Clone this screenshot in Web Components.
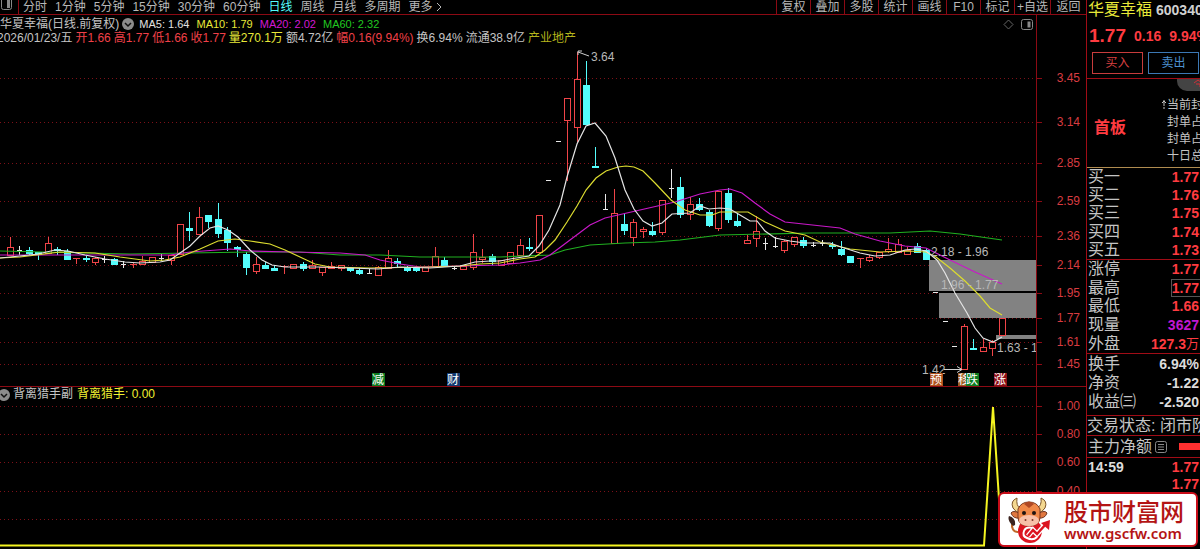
<!DOCTYPE html>
<html lang="zh-CN">
<head>
<meta charset="utf-8">
<title>华夏幸福 600340</title>
<style>
html,body{margin:0;background:#000}
body{font:12px/14px "Liberation Sans","Noto Sans CJK SC",sans-serif;color:#c4c4c4;
--line:#8c0a14;--red:#ff3b40;--yellow:#e8e838;--white:#c4c4c4;--magenta:#d418d4;--green:#20c820;--cyan:#54fcfc;overflow-x:hidden}
</style>
</head>
<body>
<stock-app></stock-app>
<script>
const define = (name, html, init) => customElements.define(name, class extends HTMLElement {
  constructor() {
    super();
    this.attachShadow({mode: 'open'}).innerHTML = typeof html === 'function' ? html(this) : html;
  }
  connectedCallback() { if (init) init(this, this.shadowRoot); }
});

/* Period tabs on the left, tool buttons on the right */
define('tool-bar', () => {
  const tabs = ['分时','1分钟','5分钟','15分钟','30分钟','60分钟','日线','周线','月线','多周期','更多'];
  const tools = ['复权','叠加','多股','统计','画线','F10','标记','+自选','返回'];
  return `<style>
  :host{display:flex;height:14px;border-bottom:1px solid var(--line);overflow:hidden}
  button{all:unset;font:inherit;line-height:10px;height:14px;white-space:nowrap;cursor:pointer;color:#b8b8b8}
  .pane{width:18px;border-right:1px solid var(--line);flex:none}
  .pane svg{display:block}
  nav{display:flex;gap:8px;padding-left:4px;flex:1}
  .on{color:var(--cyan)}
  .tools{display:flex}
  .tools button{box-sizing:border-box;width:34px;border-left:1px solid var(--line);text-align:center}
  .tools button:nth-last-child(-n+2){width:36px}
  .more svg{vertical-align:-1px;margin-left:3px}
  </style>
  <button class="pane" aria-label="窗格"><svg width="16" height="14"><rect x="1.5" y="-3.500" width="10" height="13" rx="2" fill="none" stroke="#888"/><rect x="7" y="0" width="3" height="8" fill="#888"/></svg></button>
  <nav>${tabs.map(t => `<button class="${t==='日线'?'on':''}${t==='更多'?'more':''}">${t}${t==='更多'?'<svg width="7" height="10"><path d="M1 1l4 4-4 4" fill="none" stroke="#b8b8b8"/></svg>':''}</button>`).join('')}</nav>
  <div class="tools">${tools.map(t => `<button>${t}</button>`).join('')}</div>`;
});

define('fold-button', `<style>:host{display:block;flex:none}button{all:unset;display:block;cursor:pointer}svg{display:block}</style>
<button aria-label="折叠"><svg width="12" height="12"><circle cx="6" cy="6" r="6" fill="#8c8c8c"/><path d="M3 5l3 3 3-3" fill="none" stroke="#111" stroke-width="1.500"/></svg></button>`);

define('chart-head', `<style>
:host{display:flex}
.info{flex:1;min-width:0;border-right:1px solid var(--line);display:flex;justify-content:space-between}
.axis{width:49px;flex:none}
</style><div class="info"><div><slot></slot></div><slot name="tools"></slot></div><div class="axis"></div>`);

define('price-info', `<style>
:host{display:block;padding-top:2px;height:30px;white-space:nowrap}
div{display:flex;line-height:14px}
.ma{align-items:center}
fold-button{margin:0 5px 0 3px}
.ma span{font-size:11px;margin-right:7px}
.ohlc{gap:3px;margin-left:-3px}
.r{color:#f04048}.y{color:var(--yellow)}.m{color:var(--magenta)}.g{color:var(--green)}.w{color:#e0e0e0}.d{color:#b4b41c}
</style>
<div class="ma">华夏幸福(日线.前复权)<fold-button></fold-button><span class="w">MA5: 1.64</span><span class="y">MA10: 1.79</span><span class="m">MA20: 2.02</span><span class="g">MA60: 2.32</span></div>
<div class="ohlc"><span>2026/01/23/五</span><span class="r">开1.66</span><span class="r">高1.77</span><span class="r">低1.66</span><span class="r">收1.77</span><span class="y">量270.1万</span><span>额4.72亿</span><span class="r">幅0.16(9.94%)</span><span>换6.94%</span><span>流通38.9亿</span><span class="d">产业地产</span></div>`);

define('pane-tools', `<style>:host{display:block;padding:4px 3px 0 0}svg{display:block}</style>
<svg width="30" height="12" fill="none" stroke="#888"><path d="M5.500 1l4.500 4.500-4.500 4.500L1 5.500z" stroke="#666"/><rect x="18.500" y=".5" width="11" height="10" rx="2"/><path d="M26 2.500v6" stroke-width="3"/></svg>`);

/* Candles: kind (r rise, c fall, w flat), high, body top, body bottom, low; evenly spaced */
const candles = `r237,247,255,255 w246,250,250,254 c247,250,253,254 c252,252,254,259 r237,243,253,253 c247,249,250,254 c249,251,259,259 r258,258,259,263 c256,258,259,261 r257,258,262,264 w256,259,259,262 c258,259,264,264 w261,264,264,267 r263,264,265,267 r256,261,264,264 r257,257,262,262 w254,258,258,260 r255,255,260,264 r224,224,254,254 c212,228,230,240 r207,217,234,234 c215,215,221,227 c203,219,233,237 c227,230,242,250 c246,247,249,256 c252,254,267,274 r257,264,271,273 c262,265,268,268 c265,268,270,270 r265,266,267,273 r264,264,268,268 c262,264,268,270 r260,265,268,268 r267,267,272,275 r262,266,268,268 r265,265,268,270 c267,268,270,271 c268,270,273,274 w269,273,273,273 r266,267,275,275 r250,258,268,268 c258,261,263,266 c266,267,270,271 c268,268,270,271 r267,267,271,271 r247,256,266,266 c257,260,266,266 w266,268,268,269 r266,266,269,269 r234,252,267,269 r249,257,259,262 c254,256,261,264 r260,260,265,265 r252,252,263,263 r239,245,255,255 c238,247,248,250 r215,215,252,252 w180,180,180,180 w141,141,141,141 r98,98,120,180 r52,79,127,141 c61,85,124,124 c147,166,167,167 w194,209,209,209 r189,213,243,243 c214,224,230,234 r219,222,237,245 r227,229,231,237 c222,231,234,235 r200,200,232,234 w169,188,188,197 c177,187,214,217 r197,204,214,219 c198,204,209,210 c210,212,225,226 r191,191,228,230 c188,193,219,222 c213,221,225,226 r235,240,243,243 r216,231,238,246 w238,243,243,249 w237,246,246,247 r240,241,250,252 r237,237,244,246 c237,240,245,247 w242,245,245,246 w240,243,243,245 c242,245,246,248 c241,249,254,255 c256,256,262,262 r258,258,259,267 r255,257,260,261 r252,252,257,258 r238,249,251,252 r239,244,252,252 r247,250,254,254 c243,246,252,252 c248,250,259,259 w292,292,292,292 w321,321,321,321 w346,346,346,346 r324,326,369,369 c339,348,349,349 r339,347,351,351 r340,342,348,355 r318,318,335,335`.split(' ');
const averages = {
  '#20b020': '0,251 130,254 250,252 300,252 340,255 380,255 420,257 500,257 550,255 565,250 590,245 625,243 655,242 680,240 720,235 810,233 890,233 930,231 960,234 1002,240',
  '#c818c8': '0,255 60,255 170,255 190,252 230,249 250,251 290,252 340,253 365,255 380,260 400,264 420,267 500,265 520,263 540,260 550,255 570,240 590,225 605,218 640,210 675,202 700,194 720,190 730,189 742,193 755,203 770,214 785,222 840,228 855,234 880,241 905,246 926,248 936,253 950,260 975,272 1002,284',
  '#dcdc30': '0,258 20,257 60,252 95,253 120,257 150,261 165,260 180,257 200,249 218,241 235,239 250,241 270,244 285,250 300,257 315,264 330,267 370,268 430,267 460,266 480,264 500,263 520,259 535,257 545,250 555,240 567,222 577,206 586,190 596,178 606,171 618,167 626,166 634,167 643,171 655,183 671,200 685,210 700,215 712,215 720,212 748,212 765,222 785,231 805,235 820,242 850,249 880,252 908,251 926,252 936,257 950,268 965,281 980,296 990,308 1002,315',
  '#e4e4e4': '0,258 20,256 38,254 55,250 68,251 85,255 105,259 125,262 140,263 160,262 170,260 180,253 190,246 200,236 210,228 218,226 228,230 238,237 250,250 262,260 272,265 285,267 320,267 350,268 378,269 400,267 430,268 460,266 475,262 490,261 500,261 510,259 529,256 539,246 549,230 560,205 567,177 577,144 586,126 595,123 606,136 615,158 625,190 634,209 643,221 652,226 662,223 672,214 690,213 700,206 709,209 720,208 730,209 740,215 750,221 757,221 765,231 775,238 790,241 805,243 830,243 841,247 860,253 875,256 890,255 905,250 915,249 926,251 937,260 945,273 955,293 967,313 975,328 983,338 993,342 1002,337'
};
const axis = rows => rows.map(([y, t]) => `<path d="M0 ${y}.5H1036" stroke="#7c1018" stroke-dasharray="1 3"/><path d="M1036 ${y}.5h6" stroke="#8c0a14"/>${t ? `<text x="1080" y="${y+4}" text-anchor="end" fill="#d83c40">${t}</text>` : ''}`).join('');
const chartStyle = `<style>:host{display:block}.chart{display:block;width:100%;height:auto;overflow:visible}text{font:12px "Liberation Sans","Noto Sans CJK SC",sans-serif}.crisp{shape-rendering:crispEdges}</style>`;

define('candle-chart', () => {
  const bars = candles.map((c, i) => {
    const x = Math.round(10 + i * 9.443), [h, t, b, l] = c.slice(1).split(',').map(Number), k = c[0];
    const col = {r: '#f04448', c: '#54fcfc', w: '#e8e8e8'}[k];
    const stick = (y1, y2) => y2 > y1 ? `<rect x="${x}" y="${y1}" width="1" height="${y2-y1}" fill="${col}"/>` : '';
    const wick = stick(h, t) + stick(b, l + 1);
    if (k === 'r' && b - t > 1) return wick + `<rect x="${x-3}.5" y="${t}.5" width="6" height="${b-t}" fill="#000" stroke="${col}"/>`;
    const half = k === 'w' ? 2 : 3;
    return wick + `<rect x="${x-half}" y="${t}" width="${half*2+1}" height="${Math.max(1,b-t+(k==='c'?1:0))}" fill="${col}"/>`;
  }).join('');
  const mark = (x, t, f) => `<rect x="${x}" y="373" width="13" height="13" fill="${f}"/><text x="${x}" y="384" fill="#fff">${t}</text>`;
  return chartStyle + `<svg class="chart" viewBox="0 47 1086 339" fill="none">
  <g class="crisp">${axis([[78,'3.45'],[122,'3.14'],[163,'2.85'],[201,'2.59'],[236,'2.36'],[265,'2.14'],[293,'1.95'],[318,'1.77'],[342,'1.61'],[364,'1.45']])}</g>
  <g fill="#828282"><path d="M929 260h107v31H929zM939 293h97v25h-97zM996 335h40v4h-40z"/></g>
  <g class="crisp"><path d="M1036.500 47V386" stroke="#8c0a14"/>${bars}</g>
  ${Object.entries(averages).map(([c, p]) => `<polyline points="${p}" stroke="${c}" stroke-width="1.200"/>`).join('')}
  <g fill="#b8b8b8"><text x="591" y="61">3.64</text><text x="931" y="256">2.18 - 1.96</text><text x="941" y="289">1.96 - 1.77</text><svg x="990" y="335" width="46" height="30"><text x="7" y="17" fill="#b8b8b8">1.63 - 1</text></svg><text x="922" y="374">1.42</text></g>
  <path d="M589 56l-11-4m4-1h-4v4M944 369.500h18m-5-3l5 3-5 3" stroke="#d0d0d0"/>
  ${mark(372,'减','#0c7c20')}${mark(447,'财','#12386e')}${mark(930,'预','#b0501c')}${mark(958,'移','#9c5c20')}${mark(966,'跌','#0c7c20')}${mark(994,'涨','#8c1018')}
  </svg>`;
});

define('signal-chart', () => chartStyle + `<svg class="chart" viewBox="0 402 1086 147" fill="none">
  <g class="crisp">${axis([[406,'1.00'],[434,'0.80'],[462,'0.60'],[491,'0.40'],[519,'']])}<path d="M1036.500 402V549" stroke="#8c0a14"/></g>
  <path d="M0 545.500H984L993 407l9 138" stroke="#f4f420" stroke-width="2"/></svg>`);

define('signal-info', `<style>:host{display:flex;height:15px;line-height:15px;white-space:nowrap;align-items:center}
fold-button{margin:0 3px 0 -2px}b{font-weight:400;color:#f0f030;margin-left:4px}</style>
<fold-button></fold-button><span>背离猎手副</span><b>背离猎手: 0.00</b>`);

define('quote-row', `<style>:host{display:flex;align-items:center;justify-content:space-between;font-size:16px;line-height:18px;white-space:nowrap;padding:0 1px}
.v{font-size:14px;font-weight:700;color:var(--tone,var(--red));line-height:16px;display:flex;align-items:center}
:host([boxed]) .v{border:1px solid #555;border-right:0;padding:0 1px 0 0;margin-right:-1px}
:host([tone=white]) .v{color:#dcdcdc}:host([tone=violet]) .v{color:#c018d0}
::slotted(small){font-size:13px;font-weight:400}
::slotted(.time){font-size:14px;font-weight:700;color:#dcdcdc}
</style><span><slot name="label"></slot></span><span class="v"><slot></slot></span>`);

define('quote-group', `<style>:host{display:grid;box-sizing:border-box;grid-auto-rows:1fr;border-bottom:1px solid #a00c16}</style><slot></slot>`);

define('quote-title', `<style>
:host{display:block;height:78px;border-bottom:1px solid #a00c16;white-space:nowrap;overflow:hidden}
div{display:flex;align-items:center}
.name{height:20px;gap:4px;padding-left:1px;font-size:16px;line-height:20px;color:var(--yellow)}
.name b{font-size:14px;color:#d0d0d0}
.price{height:32px;gap:8px;padding-left:2px;color:var(--red);font-size:14px;font-weight:700}
.price b{font-size:19px}
.deal{gap:5px;padding-left:5px}
button{font:inherit;line-height:18px;padding:0;width:51px;height:22px;background:#000;border:1px solid #c83c3c;color:#d84040;flex:none;cursor:pointer}
.sell{border-color:#3c78b4;color:#4c90d0}
</style>
<div class="name">华夏幸福<b>600340</b></div>
<div class="price"><b>1.77</b><span>0.16</span><span>9.94%</span></div>
<div class="deal"><button>买入</button><button class="sell">卖出</button></div>`);

define('board-note', `<style>
:host{display:flex;height:88px;border-bottom:1px solid #b08c50;white-space:nowrap;overflow:hidden;position:relative}
strong{font-size:16px;line-height:98px;color:var(--red);padding-left:7px;width:60px;flex:none}
ul{list-style:none;margin:0;padding:18px 0 0 7px;flex:none;display:grid;gap:1px;align-content:start}
li{padding-left:6px;line-height:16px}
li svg{margin-left:-6px;width:6px;height:9px}
.tag{position:absolute;left:90px;top:0;width:40px;height:12px;border-radius:0 0 0 10px;background:#444}
.tag svg{display:block;margin-left:16px}
</style>
<strong>首板</strong><ul><li><svg><path d="M3 0v6M3 7v2M1 3l2-2 2 2" stroke="#c4c4c4" fill="none"/></svg>当前封</li><li>封单占</li><li>封单占</li><li>十日总</li></ul>
<div class="tag"><svg width="10" height="8"><path d="M1 4l4-3 4 3M3 5h4v3" stroke="#d03038" fill="none"/></svg></div>`);

define('quote-panel', () => {
  const row = ([l, v, a = '']) => `<quote-row ${a}><span slot="label">${l}</span>${v}</quote-row>`;
  return `<style>
  :host{display:block;box-sizing:border-box;width:114px;flex:none;border-left:1px solid #a00c16;overflow:hidden}
  .bids{height:92px}.limits{height:94px}.stats{height:62px;padding-bottom:4px}.state,.net,.ticks{white-space:nowrap}
  .state{font-size:16px;line-height:20px;height:19px;border-bottom:1px solid #a00c16}
  .net{display:flex;align-items:center;font-size:16px;line-height:20px;height:21px;padding-left:1px;border-bottom:1px solid #a00c16}
  .net svg{margin-left:3px}.net i{flex:1;height:7px;background:#ff3030;margin-left:12px}
  .ticks{height:36px}
  </style>
  <quote-title></quote-title><board-note></board-note>
  <quote-group class="bids">${[['买一','1.77'],['买二','1.76'],['买三','1.75'],['买四','1.74'],['买五','1.73']].map(row).join('')}</quote-group>
  <quote-group class="limits">${[['涨停','1.77'],['最高','1.77','boxed'],['最低','1.66'],['现量','3627','tone="violet"'],['外盘','127.3<small>万</small>']].map(row).join('')}</quote-group>
  <quote-group class="stats">${[['换手','6.94%','tone="white"'],['净资','-1.22','tone="white"'],['收益㈢','-2.520','tone="white"']].map(row).join('')}</quote-group>
  <div class="state">交易状态: 闭市阶</div>
  <div class="net">主力净额<svg width="12" height="12" fill="none" stroke="#888"><rect x=".5" y=".5" width="11" height="11" rx="2"/><path d="M3 3.500h6M3 6h6M3 8.500h6"/></svg><i></i></div>
  <div class="ticks"><quote-row><span slot="label" class="time">14:59</span>1.77</quote-row>${row(['','1.77'])}</div>`;
});

define('site-badge', `<style>
:host{display:flex;box-sizing:border-box;position:absolute;right:2px;bottom:2px;width:200px;height:55px;border:2px solid #c80c18;border-radius:6px;background:#fff;color:#b41414;align-items:center;white-space:nowrap}
a{display:flex;align-items:center;color:inherit;text-decoration:none}
svg{flex:none;margin-left:8px}
div{margin-left:11px}
p{margin:0;font:500 24px/26px "Noto Sans CJK SC",sans-serif}
p+p{font:600 15px/18px "Noto Sans",sans-serif}
</style>
<a href="#"><svg width="45" height="48" viewBox="0 0 45 48">
<path d="M10 36Q3 36 4 26" fill="none" stroke="#c06828" stroke-width="2"/><path d="M5 30Q-1 24 1 20q7 2 6 9z" fill="#3c2420"/>
<circle cx="22" cy="35" r="12" fill="#dc1420"/>
<path d="M12 12Q8 10 9 2Q2 5 5 12q3 5 8 5zM29 12Q34 10 33 2q7 3 4 10-3 5-8 5z" fill="#f4d890" stroke="#7c5428"/>
<path d="M11 17q-6-3-8 0 2 6 9 5zM31 17q6-3 8 0-2 6-9 5z" fill="#e07840" stroke="#6c3420"/>
<path d="M10 13Q13 6 21 6t11 7L32 21q0 9-11 9t-11-9z" fill="#f08848" stroke="#7c3820"/>
<path d="M16 8q5-5 10 0l-5 4z" fill="#b04824"/>
<ellipse cx="21" cy="24.500" rx="10" ry="5.500" fill="#f8c0a8"/>
<circle cx="16" cy="17" r="2" fill="#201410"/><circle cx="26" cy="17" r="2" fill="#201410"/><circle cx="17.500" cy="24" r="1" fill="#803828"/><circle cx="24.500" cy="24" r="1" fill="#803828"/>
<path d="M25 32q-7-2-9 3t3 7q6 3 10-1" fill="none" stroke="#fff" stroke-width="2"/>
<path d="M20 40l5-6 4 4 9-10" fill="none" stroke="#fff" stroke-width="5"/><path d="M20 40l5-6 4 4 9-10" fill="none" stroke="#dc1420" stroke-width="2.500"/><path d="M33 27l9-3-1 10z" fill="#dc1420"/>
</svg><div><p>股市财富网</p><p>www.gscfw.com</p></div></a>`);

define('stock-app', `<style>
:host{display:flex;position:relative;overflow:hidden}
main{flex:1;min-width:0}
.sub{border-top:1px solid #8c0a14}
</style>
<main>
<tool-bar></tool-bar>
<chart-head><price-info></price-info><pane-tools slot="tools"></pane-tools></chart-head>
<candle-chart></candle-chart>
<section class="sub"><chart-head><signal-info></signal-info></chart-head><signal-chart></signal-chart></section>
</main>
<quote-panel></quote-panel>
<site-badge></site-badge>`);
</script>
</body>
</html>
